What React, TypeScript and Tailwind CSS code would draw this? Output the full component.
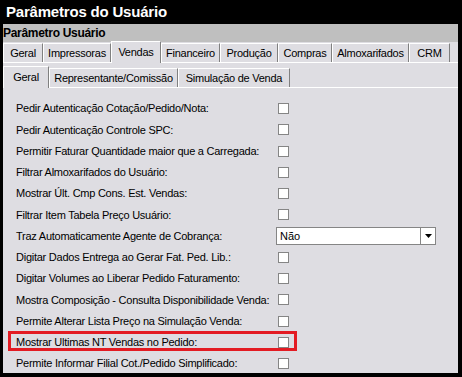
import React from "react";

const font = { fontFamily: '"Liberation Sans", Arial, sans-serif' };

type Row = { label: string; combo?: boolean; marked?: boolean };

const rows: Row[] = [
  { label: "Pedir Autenticação Cotação/Pedido/Nota:" },
  { label: "Pedir Autenticação Controle SPC:" },
  { label: "Permitir Faturar Quantidade maior que a Carregada:" },
  { label: "Filtrar Almoxarifados do Usuário:" },
  { label: "Mostrar Últ. Cmp Cons. Est. Vendas:" },
  { label: "Filtrar Item Tabela Preço Usuário:" },
  { label: "Traz Automaticamente Agente de Cobrança:", combo: true },
  { label: "Digitar Dados Entrega ao Gerar Fat. Ped. Lib.:" },
  { label: "Digitar Volumes ao Liberar Pedido Faturamento:" },
  { label: "Mostra Composição - Consulta Disponibilidade Venda:" },
  { label: "Permite Alterar Lista Preço na Simulação Venda:" },
  { label: "Mostrar Ultimas NT Vendas no Pedido:", marked: true },
  { label: "Permite Informar Filial Cot./Pedido Simplificado:" },
];

const mainTabs = [
  { label: "Geral", w: "w-[40px]" },
  { label: "Impressoras", w: "w-[68px]" },
  { label: "Vendas", w: "w-[50px]", active: true },
  { label: "Financeiro", w: "w-[59px]" },
  { label: "Produção", w: "w-[58px]" },
  { label: "Compras", w: "w-[54px]" },
  { label: "Almoxarifados", w: "w-[77px]" },
  { label: "CRM", w: "w-[41px]" },
];

const subTabs = [
  { label: "Geral", w: "w-[46px]", active: true },
  { label: "Representante/Comissão", w: "w-[129px]" },
  { label: "Simulação de Venda", w: "w-[112px]" },
];

function Tab({ label, w, active }: { label: string; w: string; active?: boolean }) {
  if (active) {
    return (
      <div
        className={`${w} h-[22px] -mb-px relative z-10 flex items-center justify-center bg-[#dedde2] border-t border-l border-white border-r border-r-[#808080] text-[11px] tracking-[-0.25px] text-black`}
      >
        {label}
      </div>
    );
  }
  return (
    <div
      className={`${w} h-[19px] flex items-center justify-center border-t border-l border-white border-r border-r-[#808080] text-[11px] tracking-[-0.25px] text-black`}
    >
      {label}
    </div>
  );
}

function Checkbox() {
  return <div className="w-[11px] h-[11px] border border-[#858585] bg-white" />;
}

function Combo() {
  return (
    <div className="w-[160px] h-[18px] border border-[#858585] bg-white flex items-center">
      <span className="flex-1 pl-[3px] text-[11px] text-black">Não</span>
      <div className="w-[15px] h-full border-l border-[#858585] bg-white flex items-center justify-center">
        <svg width="7" height="4" viewBox="0 0 7 4">
          <path d="M0 0h7L3.5 4z" fill="#000" />
        </svg>
      </div>
    </div>
  );
}

export default function App() {
  return (
    <div className="w-[462px] h-[377px] bg-black flex flex-col" style={font}>
      {/* window title */}
      <div className="h-[24px] pl-[6px] flex items-center text-white font-bold text-[15px] tracking-[-0.2px]">
        Parâmetros do Usuário
      </div>

      <div className="flex-1 ml-[3px] mr-[4px] mb-[4px] flex flex-col bg-[#dedde2] overflow-hidden">
        <div className="h-[19px] bg-[#bfbfbf] flex items-center text-[12px] tracking-[-0.3px] font-bold text-black">
          Parâmetro Usuário
        </div>

        {/* main tabs */}
        <div className="h-[20px] flex items-end">
          {mainTabs.map((t) => (
            <Tab key={t.label} {...t} />
          ))}
        </div>

        <div className="border-t border-white flex flex-col flex-1">
          {/* sub tabs */}
          <div className="h-[24px] flex items-end pt-[2px]">
            {subTabs.map((t) => (
              <Tab key={t.label} {...t} />
            ))}
          </div>

          <div className="border-t border-white flex-1 pt-[10px]">
            {rows.map((r) => (
              <div key={r.label} className="relative h-[21.25px] flex items-center">
                <span className="w-[275px] pl-[13px] shrink-0 text-[11px] tracking-[-0.25px] text-black whitespace-nowrap">
                  {r.label}
                </span>
                {r.combo ? (
                  <div className="-ml-[2px]">
                    <Combo />
                  </div>
                ) : (
                  <Checkbox />
                )}
                {r.marked && (
                  <div className="absolute left-[5px] top-[-1px] w-[289px] h-[20px] border-[3px] border-[#e31b23]" />
                )}
              </div>
            ))}
          </div>
        </div>
      </div>
    </div>
  );
}
